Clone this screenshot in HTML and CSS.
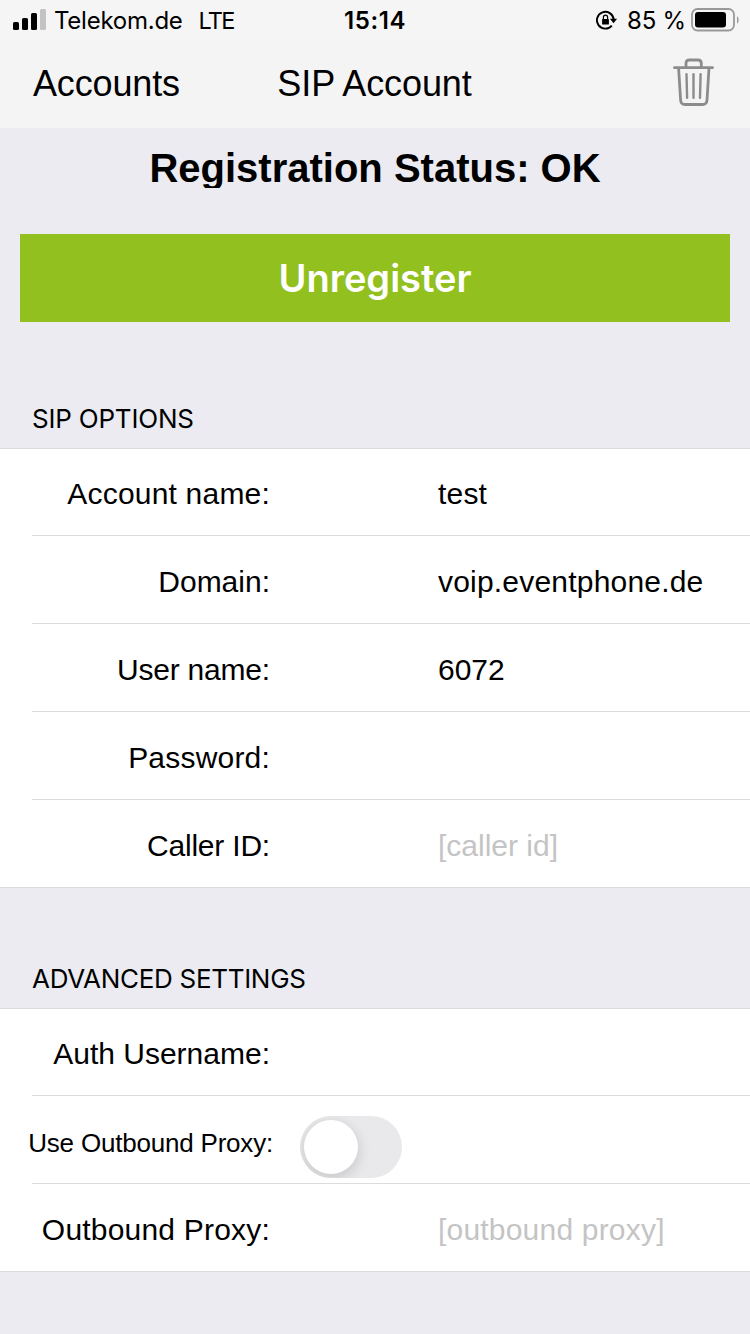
FILE: index.html
```html
<!DOCTYPE html>
<html lang="en">
<head>
<meta charset="utf-8">
<title>SIP Account</title>
<link rel="stylesheet" href="styles.css">
</head>
<body>
<header class="top">
  <div class="status">
    <div class="status-left">
      <svg class="signal" width="34" height="22" viewBox="0 0 34 22">
        <rect x="0" y="14" width="6" height="8" rx="1.5"/>
        <rect x="9" y="10" width="6" height="12" rx="1.5"/>
        <rect x="18" y="5" width="6" height="17" rx="1.5"/>
        <rect x="27" y="1" width="6" height="21" rx="1.5" fill="#c3c3c3"/>
      </svg>
      <span class="carrier">Telekom.de</span>
      <span class="network">LTE</span>
    </div>
    <span class="clock">15:14</span>
    <div class="status-right">
      <svg class="lock" width="22" height="20" viewBox="0 0 22 20">
        <path d="M15.800 15.600A8.400 8.400 0 1 1 17.700 9.400" fill="none" stroke="#000" stroke-width="1.9"/>
        <path d="M13.900 8.800h7.200l-3.600 4.500z"/>
        <rect x="6.100" y="8.900" width="6.800" height="5.600" rx=".6"/>
        <path d="M7.400 9V7.300a2.100 2.100 0 0 1 4.200 0V9" fill="none" stroke="#000" stroke-width="1.2"/>
      </svg>
      <span class="percent">85 %</span>
      <svg class="battery" width="49" height="24" viewBox="0 0 49 24">
        <rect x="1" y="1" width="42" height="21.500" rx="5.500" fill="none" stroke="#999" stroke-width="1.8"/>
        <rect x="4" y="4" width="31" height="15.400" rx="3"/>
        <path d="M46 8.200c2.200 1 2.200 6.400 0 7.400z" fill="#999"/>
      </svg>
    </div>
  </div>
  <nav class="nav">
    <span class="nav-back">Accounts</span>
    <h1 class="nav-title">SIP Account</h1>
    <svg class="trash" width="42" height="49" viewBox="0 0 42 49" fill="none" stroke="#8c8c8c" stroke-linecap="round" stroke-linejoin="round">
      <path stroke-width="2.800" d="M1.500 9.700H39.500M13 9.200V5.200Q13 2 16.200 2H25Q28.300 2 28.300 5.200V9.200M5.600 10L7.600 42Q7.900 46.500 12 46.500H29.600Q33.700 46.500 34 42L36 10"/>
      <path stroke-width="2.400" d="M13.500 16.300L14.100 39.800M20.500 16.300V39.800M27.600 16.300L27 39.800"/>
    </svg>
  </nav>
</header>
<main>
  <div class="registration">Registration Status: OK</div>
  <button class="unregister">Unregister</button>
  <h2 class="heading heading-first">SIP OPTIONS</h2>
  <section class="group">
    <div class="row"><span class="label">Account name:</span><span class="value">test</span></div>
    <div class="row"><span class="label even">Domain:</span><span class="value">voip.eventphone.de</span></div>
    <div class="row"><span class="label tight">User name:</span><span class="value even">6072</span></div>
    <div class="row"><span class="label">Password:</span></div>
    <div class="row"><span class="label tight">Caller ID:</span><span class="value hint even">[caller id]</span></div>
  </section>
  <h2 class="heading">ADVANCED SETTINGS</h2>
  <section class="group">
    <div class="row"><span class="label even">Auth Username:</span></div>
    <div class="row"><span class="label small">Use Outbound Proxy:</span><span class="switch"><span class="knob"></span></span></div>
    <div class="row"><span class="label">Outbound Proxy:</span><span class="value hint">[outbound proxy]</span></div>
  </section>
</main>
</body>
</html>
```
FILE: styles.css
```css
* { box-sizing: border-box; }
body {
  margin: 0;
  background: #ebebf1;
  color: #000;
  font-family: "Liberation Sans", Arial, sans-serif;
}
h1, h2 { margin: 0; font-weight: 400; }
svg { display: block; flex: none; }

.top { height: 128px; background: #f4f4f4; }
.status {
  height: 40px;
  display: grid;
  grid-template-columns: 1fr auto 1fr;
  align-items: center;
  background: #f5f5f5;
  font-family: Inter, sans-serif;
  font-size: 24px;
  line-height: 38px;
  white-space: nowrap;
}
.status span { padding-top: 2px; }
.status-left { display: flex; align-items: center; padding-left: 13px; }
.signal { margin: -3px 7px 0 0; }
.carrier { letter-spacing: -.25px; }
.network { margin-left: 16px; font-size: 23.5px; letter-spacing: -1.8px; }
.clock { font-weight: 600; letter-spacing: .6px; }
.status-right { display: flex; align-items: center; justify-content: flex-end; padding-right: 10px; }
.lock { margin-right: 9px; }
.percent { margin-right: 5px; letter-spacing: -.2px; }
.nav {
  height: 88px;
  display: grid;
  grid-template-columns: 1fr auto 1fr;
  align-items: center;
  padding: 0 35px 0 33px;
  font-size: 36px;
  line-height: 88px;
  letter-spacing: -.15px;
}
.nav-title { padding-left: 1px; font-size: 36px; letter-spacing: -.1px; }
.trash { justify-self: end; margin-top: -3px; }

.registration {
  height: 42px;
  margin-top: 18px;
  overflow: hidden;
  text-align: center;
  font-size: 40px;
  line-height: 44px;
  font-weight: 700;
}
.unregister {
  display: block;
  width: 710px;
  height: 88px;
  margin: 46px auto 0;
  padding: 0;
  border: 0;
  background: #92c01f;
  color: #fff;
  font: 600 38px/88px Inter, sans-serif;
}
.heading {
  height: 120px;
  padding: 75px 32px 0;
  font-family: Inter, sans-serif;
  font-size: 26px;
  line-height: 32px;
  letter-spacing: -.3px;
}
.heading-first { height: 126px; padding-top: 81px; letter-spacing: -.2px; }
.group { background: #fff; border: solid #dcdcdf; border-width: 1px 0; }
.row {
  height: 88px;
  display: flex;
  align-items: center;
  position: relative;
  padding-top: 3px;
  font-size: 30px;
  line-height: 34px;
}
.row:first-child, .row:last-child { height: 87px; }
.row:last-child { padding-top: 5px; }
.row + .row::before { content: ""; position: absolute; top: -1px; left: 32px; right: 0; height: 1px; background: #dcdcdf; }
.label { width: 270px; text-align: right; white-space: nowrap; letter-spacing: .2px; }
.value { margin-left: 168px; letter-spacing: .2px; white-space: nowrap; }
.even { letter-spacing: 0; }
.tight { letter-spacing: -.2px; }
.hint { color: #c4c4c4; }
.small { width: 273px; padding-top: 2px; font-size: 26px; letter-spacing: -.2px; }
.switch { width: 102px; height: 62px; margin: 11px 0 0 27px; padding: 4px; border-radius: 31px; background: #e9e9eb; overflow: hidden; }
.knob { display: block; width: 54px; height: 54px; border-radius: 50%; background: #fff; box-shadow: 0 4px 14px rgba(0,0,0,.16); }
```
